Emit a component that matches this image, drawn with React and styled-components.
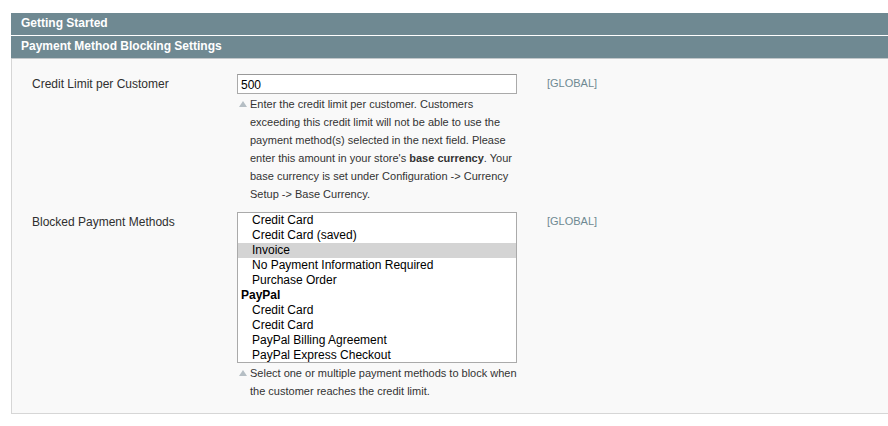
import React from 'react';
import styled, { createGlobalStyle } from 'styled-components';

const GlobalStyle = createGlobalStyle`
  html, body {
    margin: 0;
    padding: 0;
    background: #fff;
    overflow: hidden;
  }
  body {
    font-family: "Liberation Sans", Arial, Helvetica, sans-serif;
    color: #2f2f2f;
  }
`;

const Page = styled.div`
  padding-top: 13px;
  margin-left: 11px;
  margin-right: -20px;
`;

const SectionHead = styled.div`
  height: 22px;
  line-height: 21px;
  background: #6f8992;
  color: #fff;
  font-size: 12px;
  font-weight: bold;
  padding-left: 10px;
  border-bottom: 1px solid ${p => (p.$open ? '#c2c7ca' : '#fff')};
`;

const Fieldset = styled.div`
  background: #f9f9f9;
  border: 1px solid #d6d6d6;
  border-top: 0;
  padding: 15px 0 13px 20px;
`;

const Row = styled.div`
  display: grid;
  grid-template-columns: 205px 310px auto;
  margin-bottom: ${p => p.$gap || 0}px;
`;

const Label = styled.div`
  font-size: 12px;
  padding-top: 3px;
  color: #2f2f2f;
`;

const Value = styled.div`
  display: flex;
  flex-direction: column;
`;

const TextInput = styled.input`
  width: 280px;
  height: 20px;
  box-sizing: border-box;
  border: 1px solid #aaa;
  border-top-color: #999;
  background: #fff;
  font-family: "Liberation Sans", Arial, sans-serif;
  font-size: 12px;
  color: #000;
  padding: 1px 3px 0;
  margin: 0;
  outline: none;
`;

const Scope = styled.div`
  font-size: 11px;
  color: #6f8992;
  padding-top: 3px;
`;

const Note = styled.p`
  margin: 1px 0 0;
  padding-left: 13px;
  position: relative;
  font-size: 11px;
  line-height: 18px;
  color: #333;
  width: 270px;
  b { font-weight: bold; }
  &::before {
    content: '';
    position: absolute;
    left: 2px;
    top: 6px;
    border-left: 4px solid transparent;
    border-right: 4px solid transparent;
    border-bottom: 6px solid #b5bec4;
  }
`;

const ListBox = styled.div`
  width: 280px;
  height: 151px;
  box-sizing: border-box;
  border: 1px solid #aaa;
  background: #fff;
  overflow: hidden;
`;

const Option = styled.div`
  height: 15px;
  line-height: 15px;
  font-size: 12px;
  color: #000;
  padding-left: ${p => (p.$group ? 3 : 14)}px;
  font-weight: ${p => (p.$group ? 'bold' : 'normal')};
  background: ${p => (p.$selected ? '#d4d4d4' : 'transparent')};
`;

const options = [
  { label: 'Credit Card' },
  { label: 'Credit Card (saved)' },
  { label: 'Invoice', selected: true },
  { label: 'No Payment Information Required' },
  { label: 'Purchase Order' },
  { label: 'PayPal', group: true },
  { label: 'Credit Card' },
  { label: 'Credit Card' },
  { label: 'PayPal Billing Agreement' },
  { label: 'PayPal Express Checkout' },
];

export default function App() {
  return (
    <>
      <GlobalStyle />
      <Page>
        <SectionHead>Getting Started</SectionHead>
        <SectionHead $open>Payment Method Blocking Settings</SectionHead>
        <Fieldset>
          <Row $gap={9}>
            <Label>Credit Limit per Customer</Label>
            <Value>
              <TextInput defaultValue="500" />
              <Note>
                Enter the credit limit per customer. Customers exceeding this credit limit will not be able to use the
                payment method(s) selected in the next field. Please enter this amount in your store's{' '}
                <b>base currency</b>. Your base currency is set under Configuration -&gt; Currency Setup -&gt; Base
                Currency.
              </Note>
            </Value>
            <Scope>[GLOBAL]</Scope>
          </Row>
          <Row>
            <Label>Blocked Payment Methods</Label>
            <Value>
              <ListBox role="listbox" aria-multiselectable="true">
                {options.map((o, i) => (
                  <Option key={i} $group={o.group} $selected={o.selected}>
                    {o.label}
                  </Option>
                ))}
              </ListBox>
              <Note>Select one or multiple payment methods to block when the customer reaches the credit limit.</Note>
            </Value>
            <Scope>[GLOBAL]</Scope>
          </Row>
        </Fieldset>
      </Page>
    </>
  );
}
